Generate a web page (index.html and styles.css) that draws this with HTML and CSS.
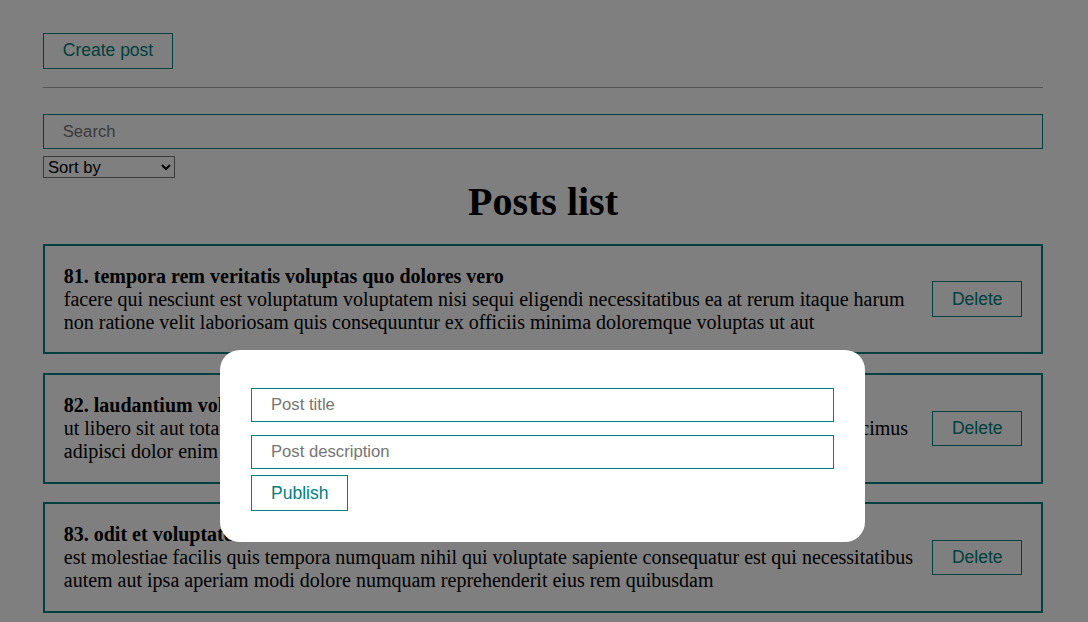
FILE: index.html
```html
<!DOCTYPE html>
<html lang="en">
<head>
<meta charset="utf-8">
<title>Posts</title>
<link rel="stylesheet" href="styles.css">
</head>
<body>
<div class="app">
  <div class="toolbar">
    <button class="btn" type="button">Create post</button>
  </div>
  <hr class="divider">
  <div class="filter">
    <input class="field" type="text" placeholder="Search">
    <select class="sort">
      <option disabled selected value="">Sort by</option>
      <option value="title">By title</option>
      <option value="body">By description</option>
    </select>
  </div>
  <h1 class="list-title">Posts list</h1>

  <div class="post">
    <div class="post-content">
      <strong>81. tempora rem veritatis voluptas quo dolores vero</strong>
      <div>facere qui nesciunt est voluptatum voluptatem nisi sequi eligendi necessitatibus ea at rerum itaque harum non ratione velit laboriosam quis consequuntur ex officiis minima doloremque voluptas ut aut</div>
    </div>
    <div class="post-actions">
      <button class="btn" type="button">Delete</button>
    </div>
  </div>

  <div class="post">
    <div class="post-content">
      <strong>82. laudantium voluptate suscipit sunt enim enim</strong>
      <div>ut libero sit aut totam inventore sunt porro sint qui sunt molestiae consequatur cupiditate qui iste ducimus adipisci dolor enim assumenda soluta laboriosam amet iste delectus hic</div>
    </div>
    <div class="post-actions">
      <button class="btn" type="button">Delete</button>
    </div>
  </div>

  <div class="post">
    <div class="post-content">
      <strong>83. odit et voluptates doloribus alias odio et</strong>
      <div>est molestiae facilis quis tempora numquam nihil qui voluptate sapiente consequatur est qui necessitatibus autem aut ipsa aperiam modi dolore numquam reprehenderit eius rem quibusdam</div>
    </div>
    <div class="post-actions">
      <button class="btn" type="button">Delete</button>
    </div>
  </div>
</div>

<div class="overlay">
  <div class="modal">
    <form class="post-form">
      <input class="field" type="text" placeholder="Post title">
      <input class="field" type="text" placeholder="Post description">
      <button class="btn" type="button">Publish</button>
    </form>
  </div>
</div>
</body>
</html>
```

FILE: styles.css
```css
* {
  margin: 0;
  padding: 0;
  box-sizing: border-box;
}

html, body {
  font-family: "Liberation Serif", "Times New Roman", serif;
  font-size: 20px;
  background: #ffffff;
  color: #000000;
}

body {
  overflow: hidden;
}

.app {
  width: 1000px;
  margin-left: 43px;
  padding-top: 33px;
}

.btn {
  padding: 6.25px 18.75px;
  color: teal;
  font-family: "Liberation Sans", Arial, sans-serif;
  font-size: 17.5px;
  line-height: normal;
  background: transparent;
  border: 1px solid teal;
  cursor: pointer;
}

.divider {
  margin: 18.75px 0 19.75px;
  border: none;
  border-top: 1px solid #a8a8a8;
  height: 0;
}

.field {
  width: 100%;
  padding: 6.25px 18.75px;
  margin: 6.25px 0;
  border: 1px solid teal;
  font-family: "Liberation Sans", Arial, sans-serif;
  font-size: 16.67px;
  line-height: 20px;
  outline: none;
  background: #ffffff;
}

.field::placeholder {
  color: #757575;
}

.sort {
  width: 132px;
  height: 22px;
  font-family: "Liberation Sans", Arial, sans-serif;
  font-size: 16.67px;
  color: #000000;
  background: #ffffff;
  border: 1px solid #767676;
  border-radius: 0;
  vertical-align: baseline;
}

.list-title {
  text-align: center;
  font-size: 40px;
  font-weight: bold;
  line-height: 46px;
  margin-top: 1px;
}

.post {
  display: flex;
  justify-content: space-between;
  align-items: center;
  padding: 18.75px;
  border: 2px solid teal;
  margin-top: 18.75px;
  line-height: 23px;
}

.post-content {
  min-width: 0;
}

.post-actions {
  flex-shrink: 0;
}

.overlay {
  position: fixed;
  top: 0;
  right: 0;
  bottom: 0;
  left: 0;
  padding-right: 3px;
  background: rgba(0, 0, 0, 0.5);
  display: flex;
  justify-content: center;
  align-items: flex-start;
}

.modal {
  width: 645px;
  margin-top: 350px;
  padding: 31.25px;
  background: #ffffff;
  border-radius: 20px;
}
```
